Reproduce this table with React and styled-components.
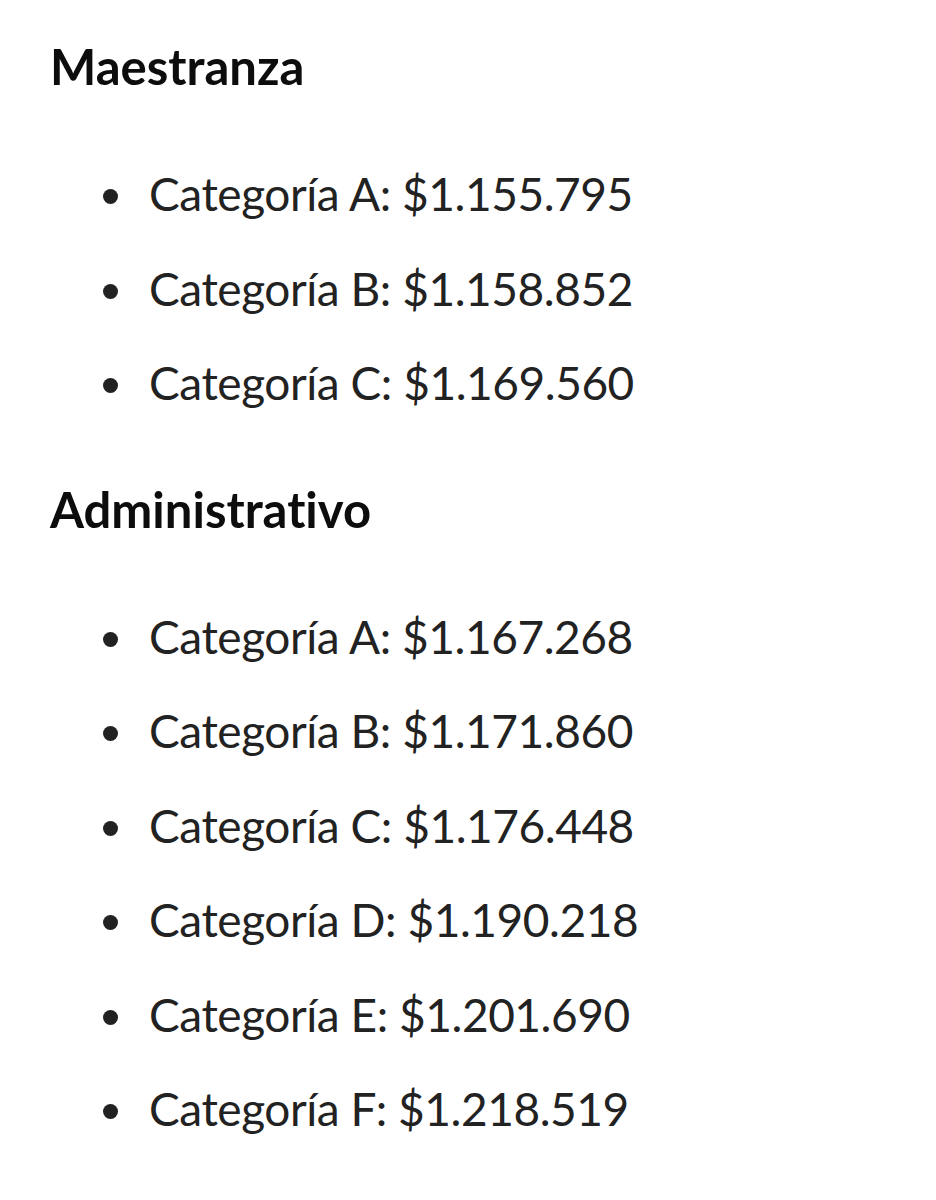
import React from "react";
import styled, { createGlobalStyle } from "styled-components";

const GlobalStyle = createGlobalStyle`
  html, body {
    margin: 0;
    padding: 0;
    background: #ffffff;
  }
  body {
    font-family: "Lato", "Noto Sans", sans-serif;
    font-variant-ligatures: none;
    font-feature-settings: "liga" 0, "clig" 0, "dlig" 0;
  }
`;

const Page = styled.main`
  padding: 36px 0 40px 50px;
`;

const Section = styled.section`
  display: flex;
  flex-direction: column;
`;

const Heading = styled.h2`
  margin: 0 0 51px 0;
  font-family: "Lato", "Noto Sans", sans-serif;
  font-weight: 700;
  font-size: 49px;
  line-height: 60px;
  color: #0d0d0d;
  letter-spacing: 0;
  font-variant-ligatures: none;
  font-feature-settings: "liga" 0, "clig" 0, "dlig" 0;
`;

const List = styled.ul`
  list-style: none;
  margin: 0 0 48px 0;
  padding: 0;
`;

const Item = styled.li`
  display: flex;
  align-items: flex-start;
  font-size: 46px;
  line-height: 94.5px;
  color: #222222;
  letter-spacing: -0.45px;
  font-variant-ligatures: none;
`;

const Bullet = styled.span`
  flex: none;
  width: 15px;
  height: 15px;
  border-radius: 50%;
  background: #222222;
  margin: 42px 31px 0 53px;
`;

const data = [
  {
    title: "Maestranza",
    items: [
      ["A", "$1.155.795"],
      ["B", "$1.158.852"],
      ["C", "$1.169.560"],
    ],
  },
  {
    title: "Administrativo",
    items: [
      ["A", "$1.167.268"],
      ["B", "$1.171.860"],
      ["C", "$1.176.448"],
      ["D", "$1.190.218"],
      ["E", "$1.201.690"],
      ["F", "$1.218.519"],
    ],
  },
];

export default function App() {
  return (
    <>
      <GlobalStyle />
      <Page>
        {data.map((s) => (
          <Section key={s.title}>
            <Heading>{s.title}</Heading>
            <List>
              {s.items.map(([cat, val]) => (
                <Item key={cat}>
                  <Bullet />
                  <span>
                    Categoría {cat}: {val}
                  </span>
                </Item>
              ))}
            </List>
          </Section>
        ))}
      </Page>
    </>
  );
}
